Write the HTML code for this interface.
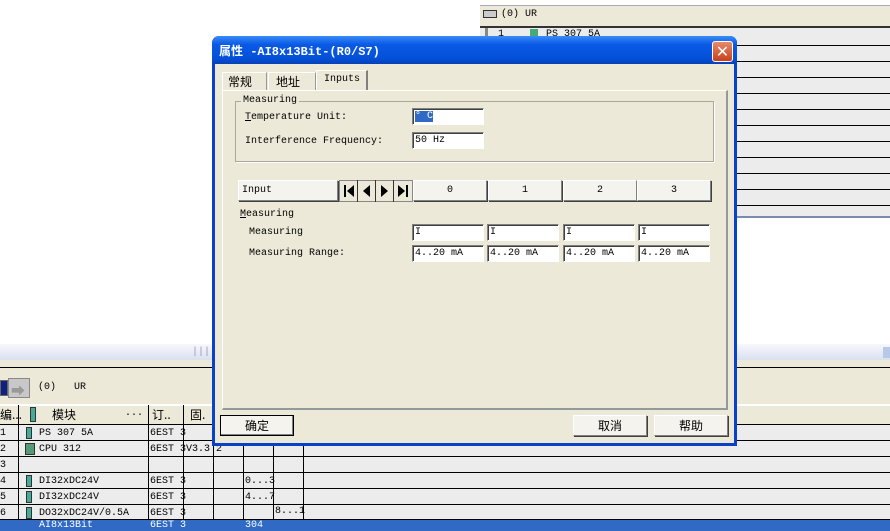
<!DOCTYPE html>
<html><head><meta charset="utf-8"><style>
*{margin:0;padding:0;box-sizing:border-box}
body{width:890px;height:531px;position:relative;overflow:hidden;background:#fff;font-family:"Liberation Mono","Noto Sans CJK SC",monospace;font-size:10px;color:#000}
.a{position:absolute}
.hl{position:absolute;height:1px;background:#000}
.vl{position:absolute;width:1px;background:#000}
.cn{font-family:"Noto Sans CJK SC","WenQuanYi Zen Hei",sans-serif;font-size:12px}
.btn{position:absolute;background:#f4f3ee;border:1px solid #fff;border-right-color:#808080;border-bottom-color:#808080;box-shadow:1px 1px 0 #404040;text-align:center}
.inp{position:absolute;background:#fff;border:1px solid #808080;border-right-color:#fff;border-bottom-color:#fff;box-shadow:inset 1px 1px 0 #404040;height:17px;line-height:15px;padding-left:2px;font-size:10px}
</style></head><body>
<!-- top right panel -->
<div class="a" style="left:480px;top:5px;width:410px;height:213px;background:#ececec;border-top:1px solid #aab"></div>
<div class="a" style="left:480px;top:6px;width:410px;height:20px;background:#ece9d8"></div>
<div class="a" style="left:483px;top:10px;width:14px;height:8px;border:1px solid #333;background:#ccc"></div>
<div class="a" style="left:501px;top:9px;">(0) UR</div>
<div class="a" style="left:480px;top:26px;width:410px;height:2px;background:#333"></div>
<div class="a" style="left:485px;top:28px;width:3px;height:190px;background:#888"></div>
<div class="a" style="left:498px;top:29px;">1</div>
<div class="a" style="left:530px;top:29px;width:8px;height:10px;background:#4a7"></div>
<div class="a" style="left:546px;top:29px;">PS 307 5A</div>
<div class="hl" style="left:737px;top:45px;width:153px"></div>
<div class="hl" style="left:737px;top:61px;width:153px"></div>
<div class="hl" style="left:737px;top:77px;width:153px"></div>
<div class="hl" style="left:737px;top:93px;width:153px"></div>
<div class="hl" style="left:737px;top:109px;width:153px"></div>
<div class="hl" style="left:737px;top:125px;width:153px"></div>
<div class="hl" style="left:737px;top:141px;width:153px"></div>
<div class="hl" style="left:737px;top:157px;width:153px"></div>
<div class="hl" style="left:737px;top:173px;width:153px"></div>
<div class="hl" style="left:737px;top:189px;width:153px"></div>
<div class="hl" style="left:737px;top:205px;width:153px"></div>
<div class="a" style="left:737px;top:216px;width:153px;height:2px;background:#7a8ab0"></div>
<!-- bottom area -->
<div class="a" style="left:0;top:344px;width:890px;height:16px;background:linear-gradient(#f8f8fc,#d8e0f0)"></div>
<div class="a" style="left:192px;top:347px;color:#99a">|||</div>
<div class="a" style="left:883px;top:347px;width:7px;height:11px;background:#b8c8e8"></div>
<div class="a" style="left:0;top:360px;width:890px;height:8px;background:#ece9d8"></div>
<div class="hl" style="left:0;top:367px;width:890px"></div>
<div class="a" style="left:0;top:368px;width:890px;height:37px;background:#ece9d8;border-bottom:1px solid #fff"></div>
<div class="a" style="left:0;top:380px;width:8px;height:16px;background:#102080;border:1px solid #666"></div>
<div class="a" style="left:8px;top:378px;width:22px;height:20px;background:#c8c8c8;border:1px solid #888"></div>
<div class="a" style="left:11px;top:381px;color:#999;font-size:14px">➡</div>
<div class="a" style="left:38px;top:382px">(0)&nbsp;&nbsp;&nbsp;UR</div>
<div class="a" style="left:0;top:405px;width:890px;height:126px;background:#ececec"></div>
<div class="a" style="left:0;top:405px;width:890px;height:19px;background:#ece9d8;border-top:1px solid #fff"></div>
<div class="a cn" style="left:0;top:406px">编...</div>
<div class="a" style="left:30px;top:407px;width:6px;height:15px;background:#4a9;border:1px solid #333"></div>
<div class="a cn" style="left:52px;top:406px">模块</div>
<div class="a" style="left:125px;top:408px">...</div>
<div class="a cn" style="left:152px;top:406px">订..</div>
<div class="a cn" style="left:190px;top:406px">固.</div>
<div class="hl" style="left:0;top:424px;width:890px"></div>
<div class="hl" style="left:0;top:440px;width:890px"></div>
<div class="hl" style="left:0;top:456px;width:890px"></div>
<div class="hl" style="left:0;top:472px;width:890px"></div>
<div class="hl" style="left:0;top:488px;width:890px"></div>
<div class="hl" style="left:0;top:504px;width:890px"></div>
<div class="hl" style="left:0;top:519px;width:890px"></div>
<div class="vl" style="left:18px;top:405px;height:115px"></div>
<div class="vl" style="left:148px;top:405px;height:115px"></div>
<div class="vl" style="left:183px;top:405px;height:115px"></div>
<div class="vl" style="left:213px;top:440px;height:80px"></div>
<div class="vl" style="left:243px;top:440px;height:80px"></div>
<div class="vl" style="left:273px;top:440px;height:80px"></div>
<div class="vl" style="left:303px;top:440px;height:80px"></div>
<div class="a" style="left:0;top:426px;line-height:16px">1<br>2<br>3<br>4<br>5<br>6</div>
<div class="a" style="left:26px;top:427px;width:6px;height:12px;background:#4a9;border:1px solid #333"></div>
<div class="a" style="left:25px;top:443px;width:10px;height:12px;background:#597;border:1px solid #333"></div>
<div class="a" style="left:26px;top:475px;width:6px;height:12px;background:#4a9;border:1px solid #333"></div>
<div class="a" style="left:26px;top:491px;width:6px;height:12px;background:#4a9;border:1px solid #333"></div>
<div class="a" style="left:26px;top:507px;width:6px;height:12px;background:#4a9;border:1px solid #333"></div>
<div class="a" style="left:39px;top:426px;line-height:16px">PS 307 5A<br>CPU 312<br>&nbsp;<br>DI32xDC24V<br>DI32xDC24V<br>DO32xDC24V/0.5A</div>
<div class="a" style="left:150px;top:426px;line-height:16px">6EST 3<br>6EST 3V3.3 2<br>&nbsp;<br>6EST 3<br>6EST 3<br>6EST 3</div>
<div class="a" style="left:245px;top:474px;line-height:16px">0...3<br>4...7</div>
<div class="a" style="left:275px;top:506px">8...1</div>
<div class="a" style="left:0;top:520px;width:890px;height:11px;background:#316ac5;color:#fff;overflow:hidden"></div>
<div class="a" style="left:39px;top:520px;color:#fff">AI8x13Bit</div>
<div class="a" style="left:150px;top:520px;color:#fff">6EST 3</div>
<div class="a" style="left:245px;top:520px;color:#fff">304</div>
<!-- dialog -->
<div class="a" style="left:212px;top:36px;width:525px;height:410px;background:#0842c8;border-radius:7px 7px 0 0"></div>
<div class="a" style="left:212px;top:36px;width:525px;height:28px;background:linear-gradient(#3a8cf6,#0a5ae6 30%,#0450d8 80%,#0840b8);border-radius:7px 7px 0 0"></div>
<div class="a" style="left:219px;top:42px;color:#fff;font-weight:bold;font-size:12px;font-family:'Liberation Mono','Noto Sans CJK SC',monospace">属性 -AI8x13Bit-(R0/S7)</div>
<div class="a" style="left:712px;top:41px;width:21px;height:21px;background:linear-gradient(#e88a6a,#c8401c);border:1px solid #fff;border-radius:3px;color:#fff;text-align:center;line-height:19px;font-size:16px;font-family:'DejaVu Sans'">✕</div>
<div class="a" style="left:215px;top:64px;width:519px;height:379px;background:#ece9d8"></div>
<!-- tabs -->
<div class="a cn" style="left:222px;top:72px;width:45px;height:19px;border:1px solid #fff;border-right-color:#919b9c;border-bottom:none;padding-left:5px;line-height:17px">常规</div>
<div class="a cn" style="left:268px;top:72px;width:48px;height:19px;border:1px solid #fff;border-right-color:#919b9c;border-bottom:none;padding-left:7px;line-height:17px">地址</div>
<div class="a" style="left:316px;top:70px;width:52px;height:21px;border:1px solid #fff;border-right:2px solid #808080;border-bottom:none;padding-left:7px;line-height:18px;background:#ece9d8">Inputs</div>
<div class="a" style="left:222px;top:90px;width:506px;height:320px;border:1px solid #fff;border-right:2px solid #919b9c;border-bottom:2px solid #919b9c"></div>
<div class="a" style="left:235px;top:101px;width:479px;height:61px;border:1px solid #aca899;box-shadow:1px 1px 0 #fff"></div>
<div class="a" style="left:241px;top:95px;background:#ece9d8;padding:0 2px">Measuring</div>
<div class="a" style="left:245px;top:112px"><u>T</u>emperature Unit:</div>
<div class="a" style="left:245px;top:136px">Interference Frequency:</div>
<div class="inp" style="left:412px;top:108px;width:72px"><span style="background:#316ac5;color:#fff">° C</span></div>
<div class="inp" style="left:412px;top:132px;width:72px">50 Hz</div>
<!-- table -->
<div class="btn" style="left:238px;top:180px;width:100px;height:21px;text-align:left;padding-left:3px;line-height:19px">Input</div>
<svg class="a" style="left:339px;top:180px" width="74" height="22" viewBox="0 0 74 22">
<rect x="0.5" y="0.5" width="73" height="21" fill="#ece9d8" stroke="#888"/>
<line x1="18.5" y1="0" x2="18.5" y2="22" stroke="#333"/>
<line x1="36.5" y1="0" x2="36.5" y2="22" stroke="#333"/>
<line x1="54.5" y1="0" x2="54.5" y2="22" stroke="#333"/>
<rect x="5" y="5" width="2" height="12" fill="#000"/><polygon points="15,5 15,17 8,11" fill="#000"/>
<polygon points="31,5 31,17 24,11" fill="#000"/>
<polygon points="42,5 42,17 49,11" fill="#000"/>
<polygon points="59,5 59,17 66,11" fill="#000"/><rect x="67" y="5" width="2" height="12" fill="#000"/>
</svg>
<div class="btn" style="left:413px;top:180px;width:74px;height:21px;line-height:19px">0</div>
<div class="btn" style="left:488px;top:180px;width:74px;height:21px;line-height:19px">1</div>
<div class="btn" style="left:563px;top:180px;width:74px;height:21px;line-height:19px">2</div>
<div class="btn" style="left:637px;top:180px;width:74px;height:21px;line-height:19px">3</div>
<div class="a" style="left:240px;top:209px"><u>M</u>easuring</div>
<div class="a" style="left:249px;top:227px">Measuring</div>
<div class="a" style="left:249px;top:248px">Measuring Range:</div>
<div class="inp" style="left:412px;top:224px;width:72px">I</div>
<div class="inp" style="left:487px;top:224px;width:72px">I</div>
<div class="inp" style="left:563px;top:224px;width:72px">I</div>
<div class="inp" style="left:638px;top:224px;width:72px">I</div>
<div class="inp" style="left:412px;top:245px;width:72px">4..20 mA</div>
<div class="inp" style="left:487px;top:245px;width:72px">4..20 mA</div>
<div class="inp" style="left:563px;top:245px;width:72px">4..20 mA</div>
<div class="inp" style="left:638px;top:245px;width:72px">4..20 mA</div>
<!-- buttons -->
<div class="btn cn" style="left:220px;top:415px;width:74px;height:21px;line-height:19px;border:1px solid #000;box-shadow:inset -1px -1px 0 #808080">确定</div>
<div class="btn cn" style="left:573px;top:415px;width:74px;height:21px;line-height:19px">取消</div>
<div class="btn cn" style="left:654px;top:415px;width:74px;height:21px;line-height:19px">帮助</div>
</body></html>
